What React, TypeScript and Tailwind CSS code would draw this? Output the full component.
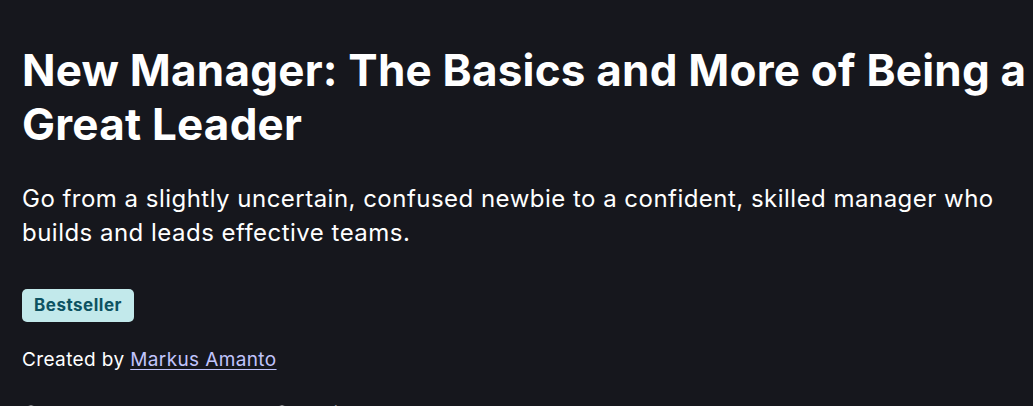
import React from 'react';

const FONT = { fontFamily: 'Inter, "Noto Sans", "Liberation Sans", sans-serif' };

const App: React.FC = () => {
  return (
    <div className="min-h-screen bg-[#16171d] text-white overflow-hidden" style={FONT}>
      <div className="pl-[22px] pt-[43px]">
        <h1 className="text-[44px] leading-[54px] font-bold tracking-[0.005em]">
          New Manager: The Basics and More of Being a Great Leader
        </h1>
        <p className="mt-[31px] text-[24px] leading-[34px] tracking-[0.02em] max-w-[990px]">
          Go from a slightly uncertain, confused newbie to a confident, skilled manager who builds and leads effective teams.
        </p>
        <div className="mt-[39px] flex">
          <span className="inline-flex items-center h-[33px] px-[12px] rounded-[5px] bg-[#c2e9eb] text-[#0d5261] text-[17px] font-bold tracking-[0.03em]">
            Bestseller
          </span>
        </div>
        <div className="mt-[25px] text-[19px] leading-[26px] tracking-[0.02em]">
          Created by{' '}
          <a href="#" className="text-[#c0c4fc] underline underline-offset-[3px]">
            Markus Amanto
          </a>
        </div>
        {/* meta row, mostly below the fold */}
        <div className="mt-[28px] flex items-center h-[24px] text-[17px] leading-[24px] text-white">
          <span className="flex items-center gap-[8px] w-[251px]">
            <svg width="18" height="18" viewBox="0 0 24 24" fill="none" stroke="currentColor" strokeWidth="2">
              <circle cx="12" cy="12" r="9" />
              <path d="M12 7v5l3 3" />
            </svg>
            Last updated 5/2024
          </span>
          <span className="flex items-center gap-[8px]">
            <svg width="18" height="18" viewBox="0 0 24 24" fill="none" stroke="currentColor" strokeWidth="2">
              <circle cx="12" cy="12" r="9" />
              <path d="M3 12h18M12 3c3 3 3 15 0 18M12 3c-3 3-3 15 0 18" />
            </svg>
            English
          </span>
        </div>
      </div>
    </div>
  );
};

export default App;
